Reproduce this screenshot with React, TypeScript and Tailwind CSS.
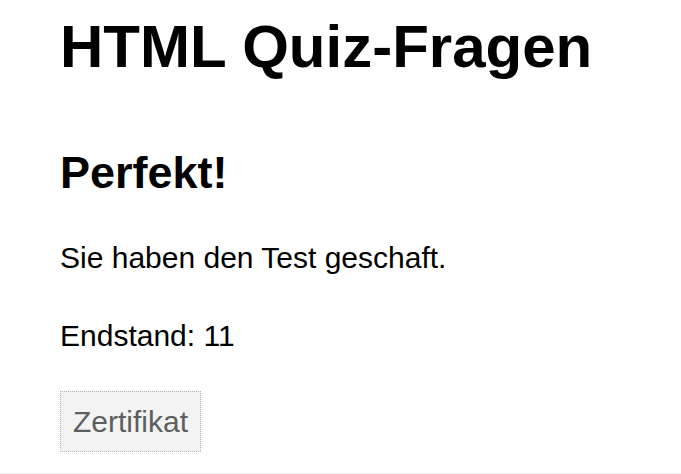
export default function App() {
  return (
    <div className="min-h-screen bg-white font-['Liberation_Sans',Arial,sans-serif] text-black">
      <div className="flex flex-col items-start pl-[60px]">
        <h1 className="pt-[12px] text-[60px] font-bold leading-[69px]">HTML Quiz-Fragen</h1>
        <h2 className="mt-[66px] text-[45px] font-bold leading-[52px]">Perfekt!</h2>
        <p className="mt-[42px] text-[30px] leading-[34px]">Sie haben den Test geschaft.</p>
        <p className="mt-[44px] text-[30px] leading-[34px]">Endstand: 11</p>
        <button className="mt-[38px] border border-dotted border-[#b5b5b5] bg-[#f3f3f3] px-[12px] py-[12px] text-[30px] leading-[35px] text-[#5e5e5e]">
          Zertifikat
        </button>
      </div>
      <div className="mt-[21px] h-px w-full bg-[#ececec]" />
    </div>
  );
}
